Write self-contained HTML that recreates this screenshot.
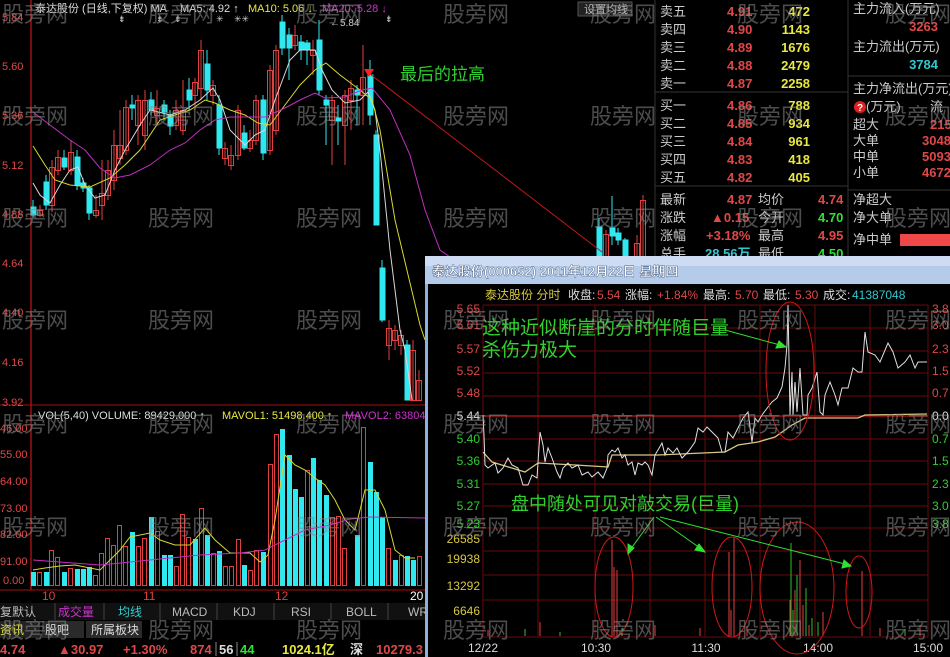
<!DOCTYPE html>
<html><head><meta charset="utf-8"><style>
html,body{margin:0;padding:0;background:#000;width:950px;height:657px;overflow:hidden}
svg{display:block}
text{font-family:"Liberation Sans","Noto Sans CJK SC",sans-serif}
</style></head><body>
<svg width="950" height="657" viewBox="0 0 950 657" xmlns="http://www.w3.org/2000/svg">
<rect width="950" height="657" fill="#000"/>
<!-- left chart axes -->
<line x1="31" y1="0" x2="31" y2="590" stroke="#a01010" stroke-width="1.5"/>
<line x1="0" y1="405" x2="425" y2="405" stroke="#a01010"/>
<line x1="0" y1="590" x2="425" y2="590" stroke="#a01010"/>
<g font-size="11" fill="#e04848" text-anchor="start">
<text x="2" y="21">5.84</text><text x="2" y="70">5.60</text><text x="2" y="119">5.36</text><text x="2" y="169">5.12</text><text x="2" y="218">4.88</text><text x="2" y="267">4.64</text><text x="2" y="316">4.40</text><text x="2" y="366">4.16</text><text x="2" y="406">3.92</text>
<text x="0" y="432">46.00</text><text x="0" y="458">55.00</text><text x="0" y="485">64.00</text><text x="0" y="512">73.00</text><text x="0" y="538">82.00</text><text x="0" y="565">91.00</text><text x="3" y="584">0.00</text>
</g>
<g font-size="11">
<text x="35" y="12" fill="#ddd">泰达股份 (日线,下复权) MA</text>
<text x="180" y="12" fill="#ddd">MA5: 4.92 ↑</text>
<text x="248" y="12" fill="#e8e840">MA10: 5.06 ↓</text>
<text x="322" y="12" fill="#d030d0">MA20: 5.28 ↓</text>
<text x="330" y="26" fill="#ccc" font-size="10">←5.84</text>
<text x="38" y="419" fill="#ddd">VOL(5,40)  VOLUME: 89429.000 ↑</text>
<text x="222" y="419" fill="#e8e840">MAVOL1: 51498.400 ↑</text>
<text x="345" y="419" fill="#d030d0">MAVOL2: 63804</text>
</g>
<g font-size="9" fill="#ccc"><text x="118" y="22">⇟</text><text x="156" y="22">⇟</text><text x="174" y="22">⇟</text><text x="216" y="22">✳</text><text x="234" y="22">✳✳</text><text x="385" y="22">⇟</text></g>
<!-- candles -->
<g stroke-width="1">
<g stroke="#30e8f0" fill="#30e8f0">
<path d="M33 200V218M46 175V210M64 150V170M77 150V190M83 178V192M89 185V220M132 95V120M151 92V115M164 100V120M170 110V135M189 78V110M207 50V100M219 95V155M244 125V150M263 95V160M282 15V55M289 28V80M301 35V60M307 40V65M319 20V95M326 95V145M338 105V145M357 85V125M370 60V125M376 130V225M382 260V322M407 340V400M599 218V257M612 196V245M618 228V245M625 238V257"/>
<rect x="31" y="207" width="5" height="8"/><rect x="44" y="182" width="5" height="23"/><rect x="62" y="158" width="5" height="9"/><rect x="75" y="157" width="5" height="28"/><rect x="81" y="183" width="5" height="5"/><rect x="87" y="188" width="5" height="25"/><rect x="130" y="105" width="5" height="3"/><rect x="149" y="100" width="5" height="10"/><rect x="162" y="105" width="5" height="7"/><rect x="168" y="115" width="5" height="11"/><rect x="187" y="90" width="5" height="10"/><rect x="205" y="64" width="5" height="26"/><rect x="217" y="105" width="5" height="43"/><rect x="242" y="133" width="5" height="15"/><rect x="261" y="100" width="5" height="53"/><rect x="280" y="22" width="5" height="26"/><rect x="287" y="35" width="5" height="13"/><rect x="299" y="42" width="5" height="8"/><rect x="305" y="43" width="5" height="7"/><rect x="317" y="40" width="5" height="50"/><rect x="324" y="100" width="5" height="5"/><rect x="336" y="118" width="5" height="3"/><rect x="355" y="90" width="5" height="5"/><rect x="368" y="75" width="5" height="40"/><rect x="374" y="135" width="5" height="90"/><rect x="380" y="268" width="5" height="52"/><rect x="405" y="345" width="5" height="55"/><rect x="597" y="227" width="5" height="30"/><rect x="610" y="228" width="5" height="8"/><rect x="616" y="233" width="5" height="7"/><rect x="623" y="240" width="5" height="17"/>
</g>
<g stroke="#e04040" fill="none">
<path d="M40 205V217M52 160V212M58 150V175M71 140V175M96 195V218M102 160V220M108 160V200M114 130V190M120 110V165M126 100V155M138 95V145M145 90V150M157 90V125M176 100V130M183 80V135M195 78V110M201 40V100M213 80V105M225 142V165M231 145V170M238 105V160M250 130V152M256 95V145M270 65V155M276 45V135M295 25V50M313 40V75M332 95V165M345 90V165M351 80V130M363 45V125M389 320V360M395 325V350M401 330V355M413 340V400M419 370V400M606 230V257M637 235V257M643 195V257"/>
<rect x="37.5" y="210.5" width="5" height="5"/><rect x="49.5" y="167.5" width="5" height="38"/><rect x="55.5" y="157.5" width="5" height="13"/><rect x="68.5" y="152.5" width="5" height="18"/><rect x="93.5" y="210.5" width="5" height="5"/><rect x="99.5" y="193.5" width="5" height="12"/><rect x="105.5" y="170.5" width="5" height="25"/><rect x="111.5" y="145.5" width="5" height="35"/><rect x="117.5" y="145.5" width="5" height="13"/><rect x="123.5" y="107.5" width="5" height="43"/><rect x="135.5" y="100.5" width="5" height="25"/><rect x="142.5" y="100.5" width="5" height="35"/><rect x="154.5" y="108.5" width="5" height="7"/><rect x="173.5" y="110.5" width="5" height="15"/><rect x="180.5" y="110.5" width="5" height="20"/><rect x="192.5" y="82.5" width="5" height="13"/><rect x="198.5" y="50.5" width="5" height="38"/><rect x="210.5" y="85.5" width="5" height="10"/><rect x="222.5" y="148.5" width="5" height="10"/><rect x="228.5" y="155.5" width="5" height="10"/><rect x="235.5" y="110.5" width="5" height="45"/><rect x="247.5" y="140.5" width="5" height="8"/><rect x="253.5" y="100.5" width="5" height="40"/><rect x="267.5" y="70.5" width="5" height="80"/><rect x="273.5" y="50.5" width="5" height="80"/><rect x="292.5" y="35.5" width="5" height="10"/><rect x="310.5" y="50.5" width="5" height="5"/><rect x="329.5" y="100.5" width="5" height="20"/><rect x="342.5" y="95.5" width="5" height="30"/><rect x="348.5" y="88.5" width="5" height="12"/><rect x="360.5" y="77.5" width="5" height="18"/><rect x="386.5" y="328.5" width="5" height="17"/><rect x="392.5" y="330.5" width="5" height="10"/><rect x="398.5" y="335.5" width="5" height="10"/><rect x="410.5" y="350.5" width="5" height="50"/><rect x="416.5" y="380.5" width="5" height="20"/><rect x="603.5" y="234.5" width="5" height="23"/><rect x="634.5" y="243.5" width="5" height="14"/><rect x="640.5" y="200.5" width="5" height="57"/>
</g>
</g>
<!-- MAs -->
<polyline fill="none" stroke="#d8d8d8" points="33,183 40,195 50,203 60,185 70,170 78,167 85,185 95,198 105,195 115,170 125,150 140,125 150,110 170,115 185,110 200,100 213,88 220,100 230,130 245,145 255,135 265,130 275,100 290,60 300,50 315,50 322,70 332,90 345,103 360,100 368,92 375,110 380,150 390,250 400,330 405,350 412,400"/>
<polyline fill="none" stroke="#d8d830" points="33,146 45,165 55,180 70,185 90,187 110,178 125,165 140,150 160,120 175,115 190,110 205,100 215,103 230,110 245,115 258,123 270,125 285,105 300,85 315,70 326,63 340,75 360,90 372,100 380,130 395,220 420,325 425,340"/>
<polyline fill="none" stroke="#c030c0" points="33,112 50,125 70,140 85,150 100,168 115,178 130,175 150,165 170,150 185,143 200,130 215,120 230,117 250,117 265,117 285,108 300,100 315,93 325,98 345,97 362,90 372,88 390,110 410,155 425,210 440,250 450,257"/>
<line x1="370" y1="74" x2="602" y2="252" stroke="#c01818"/>
<path d="M364 69L374 69L369 77Z" fill="#ff2020"/>
<text x="400" y="80" font-size="17" fill="#30d030">最后的拉高</text>
<!-- volume bars -->
<g fill="#30e8f0">
<rect x="31" y="572" width="5" height="14"/><rect x="44" y="572" width="5" height="14"/><rect x="62" y="572" width="5" height="14"/><rect x="75" y="569" width="5" height="17"/><rect x="81" y="569" width="5" height="17"/><rect x="87" y="567" width="5" height="19"/><rect x="130" y="532" width="5" height="54"/><rect x="149" y="517" width="5" height="69"/><rect x="162" y="555" width="5" height="31"/><rect x="168" y="555" width="5" height="31"/><rect x="193" y="539" width="5" height="47"/><rect x="205" y="535" width="5" height="51"/><rect x="217" y="551" width="5" height="35"/><rect x="242" y="565" width="5" height="21"/><rect x="261" y="552" width="5" height="34"/><rect x="280" y="429" width="5" height="157"/><rect x="287" y="455" width="5" height="131"/><rect x="293" y="489" width="5" height="97"/><rect x="299" y="497" width="5" height="89"/><rect x="311" y="458" width="5" height="128"/><rect x="317" y="480" width="5" height="106"/><rect x="324" y="495" width="5" height="91"/><rect x="355" y="535" width="5" height="51"/><rect x="368" y="462" width="5" height="124"/><rect x="374" y="492" width="5" height="94"/><rect x="380" y="517" width="5" height="69"/><rect x="393" y="560" width="5" height="26"/><rect x="405" y="556" width="5" height="30"/><rect x="411" y="560" width="5" height="26"/>
</g>
<g fill="none" stroke="#e04040">
<rect x="37.5" y="572.5" width="4" height="13"/><rect x="49.5" y="550.5" width="4" height="35"/><rect x="55.5" y="557.5" width="4" height="28"/><rect x="68.5" y="568.5" width="4" height="17"/><rect x="93.5" y="575.5" width="4" height="10"/><rect x="99.5" y="553.5" width="4" height="32"/><rect x="105.5" y="538.5" width="4" height="47"/><rect x="111.5" y="545.5" width="4" height="40"/><rect x="117.5" y="525.5" width="4" height="60"/><rect x="123.5" y="546.5" width="4" height="39"/><rect x="136.5" y="546.5" width="4" height="39"/><rect x="142.5" y="538.5" width="4" height="47"/><rect x="155.5" y="531.5" width="4" height="54"/><rect x="174.5" y="566.5" width="4" height="19"/><rect x="180.5" y="514.5" width="4" height="71"/><rect x="186.5" y="537.5" width="4" height="48"/><rect x="199.5" y="508.5" width="4" height="77"/><rect x="211.5" y="553.5" width="4" height="32"/><rect x="223.5" y="566.5" width="4" height="19"/><rect x="229.5" y="566.5" width="4" height="19"/><rect x="236.5" y="539.5" width="4" height="46"/><rect x="248.5" y="570.5" width="4" height="15"/><rect x="254.5" y="550.5" width="4" height="35"/><rect x="268.5" y="464.5" width="4" height="121"/><rect x="274.5" y="434.5" width="4" height="151"/><rect x="305.5" y="470.5" width="4" height="115"/><rect x="330.5" y="517.5" width="4" height="68"/><rect x="336.5" y="516.5" width="4" height="69"/><rect x="342.5" y="548.5" width="4" height="37"/><rect x="361.5" y="427.5" width="4" height="158"/><rect x="386.5" y="548.5" width="4" height="37"/><rect x="399.5" y="555.5" width="4" height="30"/><rect x="417.5" y="556.5" width="4" height="29"/>
</g>
<polyline fill="none" stroke="#d8d830" points="33,570 45,568 60,566 75,565 90,568 100,570 110,560 120,550 130,537 140,535 150,533 160,540 175,545 190,545 205,528 215,540 230,553 250,553 260,562 268,555 275,520 285,455 295,465 305,470 315,478 325,485 335,500 345,520 355,530 365,490 375,490 385,510 395,550 405,558 415,558"/>
<polyline fill="none" stroke="#c030c0" points="33,560 100,565 150,560 200,555 240,553 265,550 285,540 305,530 330,525 350,519 370,517 425,518"/>
<g font-size="12" fill="#e04040"><text x="42" y="600">10</text><text x="143" y="600">11</text><text x="275" y="600">12</text></g>
<text x="410" y="600" font-size="12" fill="#fff">20</text>
<!-- tabs -->
<rect x="0" y="603" width="425" height="17" fill="#111"/>
<g stroke="#444"><line x1="55" y1="603" x2="55" y2="620"/><line x1="104" y1="603" x2="104" y2="620"/><line x1="160" y1="603" x2="160" y2="620"/><line x1="217" y1="603" x2="217" y2="620"/><line x1="274" y1="603" x2="274" y2="620"/><line x1="331" y1="603" x2="331" y2="620"/><line x1="388" y1="603" x2="388" y2="620"/></g>
<g font-size="12" fill="#bbb"><text x="0" y="616">复默认</text><text x="58" y="616" fill="#d030d0">成交量</text><text x="118" y="616" fill="#30d0d0">均线</text><text x="172" y="616">MACD</text><text x="233" y="616">KDJ</text><text x="291" y="616">RSI</text><text x="346" y="616">BOLL</text><text x="408" y="616">WR</text></g>
<rect x="0" y="621" width="40" height="17" fill="#222"/><rect x="42" y="621" width="42" height="17" fill="#2a2a2a"/><rect x="86" y="621" width="56" height="17" fill="#2a2a2a"/>
<g font-size="12"><text x="0" y="634" fill="#e8e840">资讯</text><text x="45" y="634" fill="#ddd">股吧</text><text x="91" y="634" fill="#ddd">所属板块</text></g>
<g font-size="13" font-weight="bold"><text x="0" y="654" fill="#e04848">4.74</text><text x="58" y="654" fill="#e04848">▲30.97</text><text x="123" y="654" fill="#e04848">+1.30%</text><text x="190" y="654" fill="#e04848">874</text><text x="219" y="654" fill="#ddd">56</text><text x="240" y="654" fill="#30e030">44</text><text x="282" y="654" fill="#e8e840">1024.1亿</text><text x="350" y="654" fill="#ddd">深</text><text x="376" y="654" fill="#e04848">10279.3</text></g>
<line x1="216" y1="642" x2="216" y2="656" stroke="#888"/><line x1="237" y1="642" x2="237" y2="656" stroke="#888"/>
<!-- right panel -->
<line x1="655" y1="0" x2="655" y2="260" stroke="#333"/>
<line x1="848" y1="0" x2="848" y2="260" stroke="#333"/>
<line x1="655" y1="92" x2="848" y2="92" stroke="#333"/><line x1="655" y1="186" x2="848" y2="186" stroke="#333"/>
<line x1="848" y1="76" x2="950" y2="76" stroke="#333"/><line x1="848" y1="190" x2="950" y2="190" stroke="#333"/>
<rect x="578" y="2" width="54" height="14" fill="#222" stroke="#555"/><text x="584" y="13" font-size="11" fill="#bbb">设置均线</text>
<g font-size="13" fill="#ccc">
<text x="660" y="16">卖五</text><text x="660" y="34">卖四</text><text x="660" y="52">卖三</text><text x="660" y="70">卖二</text><text x="660" y="88">卖一</text>
<text x="660" y="110">买一</text><text x="660" y="128">买二</text><text x="660" y="146">买三</text><text x="660" y="164">买四</text><text x="660" y="182">买五</text>
<text x="660" y="204">最新</text><text x="660" y="222">涨跌</text><text x="660" y="240">涨幅</text><text x="660" y="258">总手</text>
<text x="758" y="204">均价</text><text x="758" y="222">今开</text><text x="758" y="240">最高</text><text x="758" y="258">最低</text>
</g>
<g font-size="13" font-weight="bold" fill="#e04848"><text x="727" y="16">4.91</text><text x="727" y="34">4.90</text><text x="727" y="52">4.89</text><text x="727" y="70">4.88</text><text x="727" y="88">4.87</text><text x="727" y="110">4.86</text><text x="727" y="128">4.85</text><text x="727" y="146">4.84</text><text x="727" y="164">4.83</text><text x="727" y="182">4.82</text><text x="727" y="204">4.87</text><text x="711" y="222">▲0.15</text><text x="706" y="240">+3.18%</text><text x="818" y="204">4.74</text><text x="818" y="240">4.95</text></g>
<g font-size="13" font-weight="bold" fill="#30e030"><text x="818" y="222">4.70</text><text x="818" y="258">4.50</text></g>
<text x="705" y="258" font-size="13" font-weight="bold" fill="#30c8d0">28.56万</text>
<g font-size="13" font-weight="bold" fill="#e8e840" text-anchor="end"><text x="810" y="16">472</text><text x="810" y="34">1143</text><text x="810" y="52">1676</text><text x="810" y="70">2479</text><text x="810" y="88">2258</text><text x="810" y="110">788</text><text x="810" y="128">934</text><text x="810" y="146">961</text><text x="810" y="164">418</text><text x="810" y="182">405</text></g>
<g font-size="13" fill="#ccc"><text x="853" y="13">主力流入(万元)</text><text x="853" y="51">主力流出(万元)</text><text x="853" y="93">主力净流出(万元)</text><text x="866" y="111">(万元)</text><text x="930" y="111">流</text><text x="853" y="129">超大</text><text x="853" y="145">大单</text><text x="853" y="161">中单</text><text x="853" y="177">小单</text><text x="853" y="204">净超大</text><text x="853" y="222">净大单</text><text x="853" y="244">净中单</text></g>
<circle cx="860" cy="107" r="6" fill="#e02020"/><text x="857" y="111" font-size="10" fill="#fff" font-weight="bold">?</text>
<g font-size="13" font-weight="bold" fill="#e04848"><text x="938" y="31" text-anchor="end">3263</text><text x="930" y="129">215</text><text x="922" y="145">3048</text><text x="922" y="161">5093</text><text x="922" y="177">4672</text></g>
<text x="938" y="69" font-size="13" font-weight="bold" fill="#30c8d0" text-anchor="end">3784</text>
<rect x="900" y="234" width="50" height="12" fill="#f04848"/>
<!-- popup -->
<rect x="425" y="256" width="525" height="401" fill="#8fb0de"/>
<rect x="425" y="256" width="525" height="28" fill="#b4cbea"/>
<rect x="425" y="256" width="525" height="10" fill="#cddcf2"/>
<text x="432" y="276" font-size="13" font-weight="bold" fill="#fff" stroke="#3a5078" stroke-width="0.4">泰达股份(000652) 2011年12月22日 星期四</text>
<rect x="428" y="284" width="522" height="373" fill="#000"/>
<g font-size="12"><text x="485" y="299" fill="#d8c840">泰达股份  分时</text><text x="568" y="299" fill="#ddd">收盘:</text><text x="597" y="299" fill="#e04848">5.54</text><text x="625" y="299" fill="#ddd">涨幅:</text><text x="657" y="299" fill="#e04848">+1.84%</text><text x="703" y="299" fill="#ddd">最高:</text><text x="735" y="299" fill="#e04848">5.70</text><text x="763" y="299" fill="#ddd">最低:</text><text x="795" y="299" fill="#e04848">5.30</text><text x="823" y="299" fill="#ddd">成交:</text><text x="852" y="299" fill="#30c8d0">41387048</text></g>
<g stroke="#6a0808">
<path d="M483 305H928M483 328H928M483 351H928M483 373H928M483 396H928M483 439H928M483 461H928M483 484H928M483 506H928M483 528H928M483 551H928M483 575H928M483 600H928M483 637H928"/>
<path d="M483 305V637M538 305V637M595 305V637M650 305V637M705 305V637M760 305V637M815 305V637M870 305V637M928 305V637"/>
</g>
<line x1="483" y1="416" x2="928" y2="416" stroke="#a01010" stroke-width="1.5"/>
<g font-size="12" text-anchor="end"><text x="480" y="313" fill="#e04848">5.65</text><text x="480" y="329" fill="#e04848">5.61</text><text x="480" y="353" fill="#e04848">5.57</text><text x="480" y="375" fill="#e04848">5.52</text><text x="480" y="397" fill="#e04848">5.48</text><text x="480" y="420" fill="#ddd">5.44</text><text x="480" y="443" fill="#30d030">5.40</text><text x="480" y="465" fill="#30d030">5.36</text><text x="480" y="488" fill="#30d030">5.31</text><text x="480" y="510" fill="#30d030">5.27</text><text x="480" y="528" fill="#30d030">5.23</text><text x="480" y="543" fill="#d8c840">26585</text><text x="480" y="563" fill="#d8c840">19938</text><text x="480" y="590" fill="#d8c840">13292</text><text x="480" y="615" fill="#d8c840">6646</text></g>
<g font-size="12"><text x="932" y="313" fill="#e04848">3.8</text><text x="932" y="329" fill="#e04848">3.0</text><text x="932" y="353" fill="#e04848">2.3</text><text x="932" y="375" fill="#e04848">1.5</text><text x="932" y="397" fill="#e04848">0.7</text><text x="932" y="420" fill="#ddd">0.0</text><text x="932" y="443" fill="#30d030">0.7</text><text x="932" y="465" fill="#30d030">1.5</text><text x="932" y="488" fill="#30d030">2.3</text><text x="932" y="510" fill="#30d030">3.0</text><text x="932" y="528" fill="#30d030">3.8</text></g>
<g font-size="12" fill="#ddd" text-anchor="middle"><text x="483" y="652">12/22</text><text x="596" y="652">10:30</text><text x="706" y="652">11:30</text><text x="818" y="652">14:00</text><text x="928" y="652">15:00</text></g>
<!-- intraday volume -->
<g stroke="#e04040"><path d="M612 636V540M614 636V567M617 636V570M729 636V552M734 636V538M731 636V610M790 636V600M795 636V590M800 636V560M803 636V605M809 636V625M823 636V612M862 636V571M540 636V622M655 636V625M700 636V628M747 636V626M880 636V628M920 636V625M488 636V630"/></g>
<g stroke="#30c030"><path d="M791 636V543M793 636V610M797 636V575M806 636V588M812 636V618M818 636V622M525 636V629M560 636V632M622 636V628M905 636V629"/></g>
<!-- price lines -->
<polyline fill="none" stroke="#d8c880" stroke-width="1.3" points="483,452 492,462 525,472 538,463 575,465 608,467 612,455 658,455 725,452 738,445 758,442 775,437 792,425 805,418 858,418 865,415 927,414"/>
<polyline fill="none" stroke="#e0e0e0" points="483,415 484,435 485,465 488,468 495,463 498,473 503,468 508,458 512,465 518,468 523,485 528,485 532,475 537,478 540,432 543,445 545,462 548,448 552,458 557,472 560,478 563,468 568,463 572,468 578,465 582,475 588,472 592,477 598,472 603,478 607,468 608,455 612,450 615,452 618,448 622,458 625,455 628,465 632,462 635,475 638,463 642,465 645,462 648,465 652,475 655,455 658,450 662,443 665,455 668,448 673,453 677,448 682,458 688,452 695,442 698,428 703,432 707,427 712,432 718,438 722,452 725,452 728,432 733,438 738,428 743,418 748,412 752,442 755,418 758,422 762,415 768,407 772,402 777,398 782,387 785,368 787,345 788,305 790,415 792,372 793,415 795,382 797,412 800,368 803,415 807,415 808,395 812,388 817,372 820,412 823,415 825,395 830,382 835,395 838,405 842,388 848,388 853,368 858,372 862,372 865,332 868,352 875,355 880,362 888,343 893,352 898,368 905,362 910,355 915,368 918,362 927,362"/>
<g fill="none" stroke="#d01818"><ellipse cx="790" cy="371" rx="24" ry="69"/><ellipse cx="614" cy="587" rx="19" ry="50"/><ellipse cx="732" cy="587" rx="20" ry="50"/><ellipse cx="797" cy="588" rx="37" ry="66"/><ellipse cx="859" cy="592" rx="13" ry="36"/></g>
<g stroke="#30e030" fill="#30e030"><line x1="725" y1="330" x2="780" y2="345"/><path d="M786 347L776 348L779 341Z"/>
<line x1="654" y1="517" x2="630" y2="550"/><path d="M628 554L628 544L634 548Z"/>
<line x1="656" y1="517" x2="700" y2="548"/><path d="M705 552L695 550L699 544Z"/>
<line x1="660" y1="517" x2="845" y2="564"/><path d="M851 566L842 568L844 560Z"/></g>
<g font-size="19" fill="#30d030"><text x="482" y="334">这种近似断崖的分时伴随巨量</text><text x="482" y="356">杀伤力极大</text><text x="511" y="510" font-size="18">盘中随处可见对敲交易(巨量)</text></g>
<!-- watermarks -->
<g font-size="22" fill="#8a8a8a" fill-opacity="0.55">
<text x="2" y="22">股旁网</text><text x="148" y="22">股旁网</text><text x="296" y="22">股旁网</text><text x="443" y="22">股旁网</text><text x="590" y="22">股旁网</text><text x="737" y="22">股旁网</text><text x="885" y="22">股旁网</text>
<text x="2" y="124">股旁网</text><text x="148" y="124">股旁网</text><text x="296" y="124">股旁网</text><text x="443" y="124">股旁网</text><text x="590" y="124">股旁网</text><text x="737" y="124">股旁网</text><text x="885" y="124">股旁网</text>
<text x="2" y="226">股旁网</text><text x="148" y="226">股旁网</text><text x="296" y="226">股旁网</text><text x="443" y="226">股旁网</text><text x="590" y="226">股旁网</text><text x="737" y="226">股旁网</text><text x="885" y="226">股旁网</text>
<text x="2" y="328">股旁网</text><text x="148" y="328">股旁网</text><text x="296" y="328">股旁网</text><text x="443" y="328">股旁网</text><text x="590" y="328">股旁网</text><text x="737" y="328">股旁网</text><text x="885" y="328">股旁网</text>
<text x="2" y="432">股旁网</text><text x="148" y="432">股旁网</text><text x="296" y="432">股旁网</text><text x="443" y="432">股旁网</text><text x="590" y="432">股旁网</text><text x="737" y="432">股旁网</text><text x="885" y="432">股旁网</text>
<text x="2" y="535">股旁网</text><text x="148" y="535">股旁网</text><text x="296" y="535">股旁网</text><text x="443" y="535">股旁网</text><text x="590" y="535">股旁网</text><text x="737" y="535">股旁网</text><text x="885" y="535">股旁网</text>
<text x="2" y="638">股旁网</text><text x="148" y="638">股旁网</text><text x="296" y="638">股旁网</text><text x="443" y="638">股旁网</text><text x="590" y="638">股旁网</text><text x="737" y="638">股旁网</text><text x="885" y="638">股旁网</text>
</g>
</svg>
</body></html>
